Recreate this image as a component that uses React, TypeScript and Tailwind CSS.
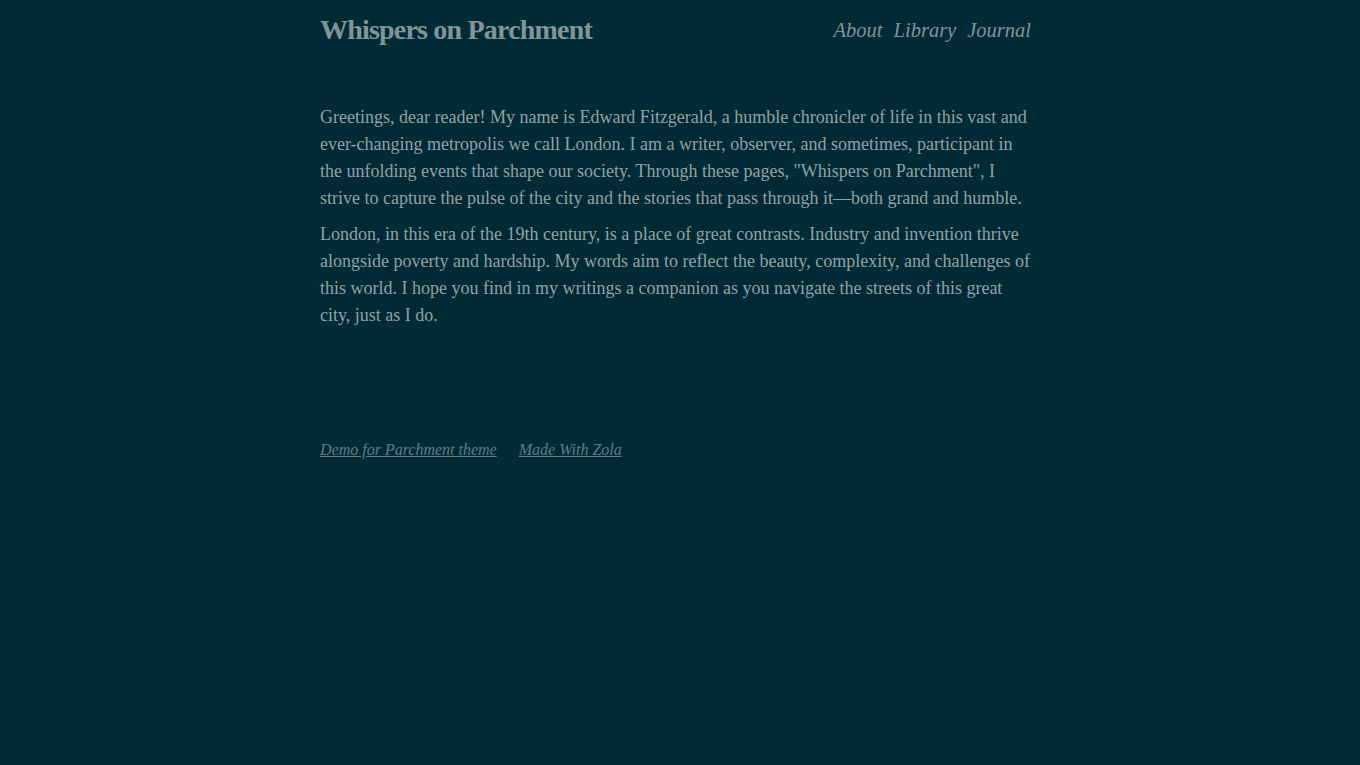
import React from "react";

const App = () => {
  return (
    <div
      className="min-h-screen bg-[#002b36] text-[#93a1a1]"
      style={{ fontFamily: '"Liberation Serif", "DejaVu Serif", serif' }}
    >
      <div className="w-[720px] mx-auto">
        <header className="flex items-center justify-between h-[60px]">
          <h1 className="text-[28px] font-bold text-[#839496] tracking-[-0.8px]">
            Whispers on Parchment
          </h1>
          <nav className="flex gap-[11px] italic text-[20.5px] text-[#839496] pr-[9px] pt-[1px]">
            <a href="#">About</a>
            <a href="#">Library</a>
            <a href="#">Journal</a>
          </nav>
        </header>

        <main className="mt-[44px] text-[18px] leading-[27px]">
          <p className="mb-[9px]">
            Greetings, dear reader! My name is Edward Fitzgerald, a humble chronicler of life in this vast and
            <br />
            ever-changing metropolis we call London. I am a writer, observer, and sometimes, participant in
            <br />
            the unfolding events that shape our society. Through these pages, "Whispers on Parchment", I
            <br />
            strive to capture the pulse of the city and the stories that pass through it—both grand and humble.
          </p>
          <p>
            London, in this era of the 19th century, is a place of great contrasts. Industry and invention thrive
            <br />
            alongside poverty and hardship. My words aim to reflect the beauty, complexity, and challenges of
            <br />
            this world. I hope you find in my writings a companion as you navigate the streets of this great
            <br />
            city, just as I do.
          </p>
        </main>

        <footer className="mt-[109px] flex gap-[22px] italic text-[16px] text-[#657b83]">
          <a href="#" className="underline">Demo for Parchment theme</a>
          <a href="#" className="underline">Made With Zola</a>
        </footer>
      </div>
    </div>
  );
};

export default App;
